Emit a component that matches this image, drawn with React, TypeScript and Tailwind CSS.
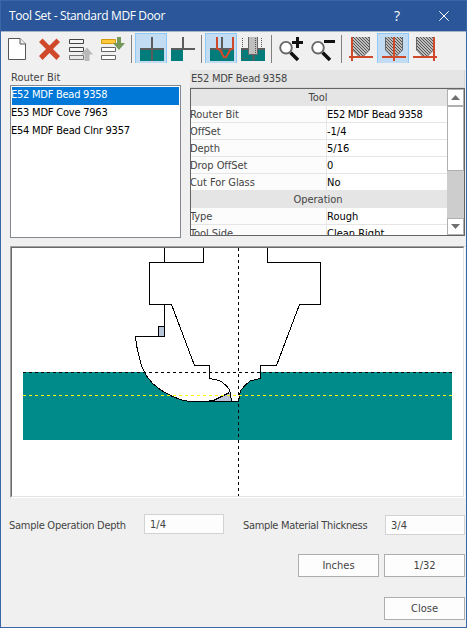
import type { ReactNode } from "react";

const RED = "#cf4a2b";
const TEAL = "#007c7a";
const DARK = "#5c5c5c";

function ToolButton({ active, children }: { active?: boolean; children: ReactNode }) {
  return (
    <button
      className={
        active
          ? "flex h-[30px] w-8 shrink-0 items-start border border-b-0 border-[#90c8f6] bg-[#c1dcf3] pt-[3px] pl-1"
          : "flex h-[30px] w-8 shrink-0 items-start pt-1 pl-[5px]"
      }
    >
      <svg width="24" height="24" viewBox="0 0 24 24" className="shrink-0 overflow-visible">
        {children}
      </svg>
    </button>
  );
}

function Separator() {
  return (
    <div className="flex h-[30px] w-1.5 shrink-0 pt-0.5 pl-0.5">
      <div className="h-7 w-px bg-[#808080]" />
    </div>
  );
}

function Lens() {
  return (
    <>
      <path d="M10.5 15.5L18 23" stroke="#111" strokeWidth="3.6" />
      <circle cx="6" cy="10.7" r="5.8" fill="#fff" stroke="#666" strokeWidth="1.9" />
    </>
  );
}

function RouterTip({ x }: { x: number }) {
  return (
    <path
      d={`M${x + 0.5} 0V13L${x + 7.5} 20H${x + 10.5}L${x + 17.5} 13V0`}
      fill="url(#hatch)"
      stroke="#666"
    />
  );
}

function Toolbar() {
  return (
    <div className="flex h-[36px] items-start pt-px">
      <ToolButton>
        <path d="M2.5 1.5H14L19.5 7V22.5H2.5Z" fill="#fff" stroke="#555" />
        <path d="M14 1.5V7H19.5" fill="#eee" stroke="#555" />
      </ToolButton>
      <ToolButton>
        <path
          d="M4.5 1.5L11.5 8.5L18.5 1.5L22 5L15 12L22 19L18.5 23L11.5 16L4.5 23L1 19L8 12L1 5Z"
          fill={RED}
        />
      </ToolButton>
      <ToolButton>
        <g fill="#f4f4f4" stroke="#444">
          <path d="M-.5 2.5H13.5V6.5H-.5ZM-.5 10.5H13.5V14.5H-.5Z" />
          <path d="M-.5 18.5H13.5V22.5H-.5Z" stroke="#777" fill="#e8e8e8" />
        </g>
        <path d="M17 10.5L23 17.5H19.5V24H14.5V17.5H11Z" fill="#b9b9b9" />
      </ToolButton>
      <ToolButton>
        <path d="M-.5 2.5H13.5V6.5H-.5Z" fill="#fdc83a" stroke="#d39a10" />
        <path d="M-.5 10.5H13.5V14.5H-.5ZM-.5 18.5H13.5V22.5H-.5Z" fill="#fff" stroke="#666" />
        <path d="M15 0H19V6H23L17 13L11 6H15Z" fill="#73985a" />
      </ToolButton>
      <Separator />
      <ToolButton active>
        <path d="M0 13H24V24H0Z" fill={TEAL} />
        <path d="M0 11H24V13H0ZM11 0H13V24H11Z" fill={DARK} />
      </ToolButton>
      <ToolButton>
        <path d="M-1 13H11V24H-1Z" fill={TEAL} />
        <path d="M-1 11H23V13H-1ZM10 0H12V13H10Z" fill={DARK} />
      </ToolButton>
      <Separator />
      <ToolButton active>
        <path d="M0 13H24V24H0Z" fill={TEAL} />
        <path d="M0 11H24V13H0ZM11 0H13V18H11Z" fill={DARK} />
        <path
          d="M7 0V11.5L10 13L14 20.2H16L20 13L23 11.5V0"
          fill="none"
          stroke={RED}
          strokeWidth="2"
        />
      </ToolButton>
      <ToolButton>
        <path d="M-1 13H23V24H-1Z" fill={TEAL} />
        <path d="M-1 11H23V13H-1ZM10.5 18H12.5V24H10.5Z" fill={DARK} />
        <path d="M6.5 0V17.5H15.5V0" fill="#bebebe" stroke="#666" />
        <path
          d="M.5 1V22M13.5 1V17M19.5 1V11"
          fill="none"
          stroke="#555"
          strokeDasharray="1 1"
          shapeRendering="crispEdges"
        />
        <path d="M.5 21.5H7" stroke="#555" strokeDasharray="1 1" shapeRendering="crispEdges" />
      </ToolButton>
      <Separator />
      <ToolButton>
        <Lens />
        <path d="M12 4H16V0H19V4H23V7H19V11H16V7H12Z" fill="#111" />
      </ToolButton>
      <ToolButton>
        <Lens />
        <path d="M12 3H23V6H12Z" fill="#111" />
      </ToolButton>
      <Separator />
      <ToolButton>
        <RouterTip x={2} />
        <path d="M-1 19H23V21H-1ZM1 0H3V24H1Z" fill={RED} />
      </ToolButton>
      <ToolButton active>
        <RouterTip x={3} />
        <path d="M0 19H24V21H0ZM11 0H13V24H11Z" fill={RED} />
      </ToolButton>
      <ToolButton>
        <RouterTip x={2} />
        <path d="M-1 19H23V21H-1ZM19 0H21V24H19Z" fill={RED} />
      </ToolButton>
    </div>
  );
}

const bits = ["E52 MDF Bead 9358", "E53 MDF Cove 7963", "E54 MDF Bead Clnr 9357"];

type Row = { heading: string } | { name: string; value: string };
const rows: Row[] = [
  { heading: "Tool" },
  { name: "Router Bit", value: "E52 MDF Bead 9358" },
  { name: "OffSet", value: "-1/4" },
  { name: "Depth", value: "5/16" },
  { name: "Drop OffSet", value: "0" },
  { name: "Cut For Glass", value: "No" },
  { heading: "Operation" },
  { name: "Type", value: "Rough" },
  { name: "Tool Side", value: "Clean Right" },
];

function PropertyGrid() {
  return (
    <div className="flex h-[148px] border border-[#646464] bg-white">
      <div className="flex-1 overflow-hidden">
        {rows.map((r, i) =>
          "heading" in r ? (
            <div key={i} className="h-[17px] bg-[#e5e5e5] pr-0.5 text-center leading-[18px]">
              {r.heading}
            </div>
          ) : (
            <div key={i} className="flex h-[17px] border-b border-[#e5e5e5] leading-[17px]">
              <div className="w-[136px] border-r border-[#e5e5e5] bg-[#fcfcfc] -indent-px tracking-[-0.06px]">{r.name}</div>
              <div className={r.value.startsWith("E5") ? "tracking-[-0.29px] text-black" : "text-black"}>
                {r.value}
              </div>
            </div>
          ),
        )}
      </div>
      <div className="flex w-[17px] flex-col bg-[#cdcdcd]">
        <div className="flex h-[17px] items-center justify-center border border-[#b0b0b0] bg-white">
          <svg width="9" height="5"><path d="M0 5L4.5 0L9 5Z" fill="#707070" /></svg>
        </div>
        <div className="h-[65px] border border-[#b0b0b0] bg-white" />
        <div className="mt-auto flex h-[17px] items-center justify-center border border-[#b0b0b0] bg-white">
          <svg width="9" height="5"><path d="M0 0L4.5 5L9 0Z" fill="#707070" /></svg>
        </div>
      </div>
    </div>
  );
}

function ProfileDrawing() {
  const bit =
    "M203.5 247V262.5H149.5V304.5H171.5L194.5 365.5H209.5V378.5L215 379.5L221.5 381.5L226 385.5L229.5 389.5L230.5 394.5L231.5 400.5L233 401.5H238.5L239.5 396.5L240.5 390.5L245.5 385L250 381L256 379.5L260.5 378.5V365.5H276.5L299.5 304.5H320.5V262.5H267.5V247";
  const blade =
    "M164.5 304.5V336.5H135.5L136.5 345L138.5 354.5L141.5 365.5L145.5 374.5L152.5 383.5L161.5 390.5L171.5 396L181.5 400L189.5 401.5H232L230.5 392.5L229.5 389.5L226 385.5L221.5 381.5L215 379.5L209.5 378.5V365.5H194.5L171.5 304.5Z";
  return (
    <svg width="451" height="248" viewBox="12 248 451 248" shapeRendering="crispEdges" className="block">
      <rect x="23" y="372" width="429" height="68" fill="#008b8b" />
      <path d={blade} fill="#fff" />
      <path d={bit} fill="#fff" />
      <path d="M205 401.5L213.5 400.5L221.5 396.5L229.5 392.5L231.5 401.5Z" fill="#b8c5d8" />
      <path d="M205 401.5L213.5 400.5L221.5 396.5L229.5 392.5" fill="none" stroke="#000" />
      <rect x="158.5" y="326.5" width="6" height="10" fill="#b8c5d8" stroke="#000" />
      <path d={bit} fill="none" stroke="#000" />
      <path
        d="M164.5 248V262M164.5 304.5V336.5H135.5L136.5 345L138.5 354.5L141.5 365.5L145.5 374.5L152.5 383.5L161.5 390.5L171.5 396L181.5 400L189.5 401.5H238"
        fill="none"
        stroke="#000"
      />
      <path d="M23 372.5H452M238.5 248V496" fill="none" stroke="#000" strokeDasharray="3 3" />
      <path d="M23 395.5H452" stroke="#ff0" strokeDasharray="3 3" />
    </svg>
  );
}

function ActionButton({ children }: { children: ReactNode }) {
  return (
    <button className="h-[23px] w-[81px] border border-[#adadad] bg-[#fdfdfd] leading-[21px]">{children}</button>
  );
}

export default function App() {
  return (
    <div className="flex h-[628px] w-[467px] flex-col overflow-hidden border-x border-b border-[#3b66a8] bg-[#f0f0f0] font-['DejaVu_Sans_Condensed','DejaVu_Sans',sans-serif] text-[11px] whitespace-nowrap text-[#444] [font-stretch:condensed]">
      <header className="flex h-8 shrink-0 items-center border-t border-b border-t-[#3b66a8] border-b-[#a5b3c8] bg-[#2b579a] pr-[17px] pl-2 font-['Open_Sans',sans-serif] text-xs text-white [font-stretch:normal]">
        <span className="flex-1 tracking-[-0.36px]">Tool Set - Standard MDF Door</span>
        <span className="mr-[39px] text-sm">?</span>
        <svg width="10" height="10" viewBox="0 0 10 10" className="shrink-0">
          <path d="M.3.3L9.7 9.7M9.7.3L.3 9.7" stroke="#fff" />
        </svg>
      </header>
      <svg width="0" height="0" className="fixed">
        <defs>
          <pattern id="hatch" width="3" height="3" patternUnits="userSpaceOnUse">
            <rect width="3" height="3" fill="#bdbdbd" />
            <path d="M0 0H1V1H0ZM1 1H2V2H1ZM2 2H3V3H2Z" fill="#555" />
          </pattern>
        </defs>
      </svg>
      <Toolbar />
      <main className="flex flex-1 flex-col pl-[9px]">
        <div className="flex gap-[9px] pt-0.5">
          <section className="w-[171px]">
            <h2 className="h-[15px] pl-px leading-[15px]">Router Bit</h2>
            <ul className="h-[153px] border border-[#828790] bg-white p-px text-black">
              {bits.map((b, i) => (
                <li
                  key={b}
                  className={
                    i === 0
                      ? "h-[18px] bg-[#0078d7] -indent-px leading-[15px] tracking-[-0.25px] text-white"
                      : "h-[18px] -indent-px leading-[15px] tracking-[-0.22px]"
                  }
                >
                  {b}
                </li>
              ))}
            </ul>
          </section>
          <section className="w-[275px]">
            <h2 className="h-[18px] border-r border-b border-[#d5d5d5] bg-[#e5e5e5] pl-px leading-[18px] tracking-[-0.27px]">
              E52 MDF Bead 9358
            </h2>
            <PropertyGrid />
          </section>
        </div>
        <div className="mt-2 h-[252px] w-[455px] border border-t-[#a0a0a0] border-r-white border-b-white border-l-[#a0a0a0]">
          <div className="h-[250px] border border-t-[#696969] border-r-[#e3e3e3] border-b-[#e3e3e3] border-l-[#696969] bg-white">
            <ProfileDrawing />
          </div>
        </div>
        <div className="flex pt-4">
          <span className="w-[134px] -indent-px pt-px leading-[22px] tracking-[-0.27px]">Sample Operation Depth</span>
          <div className="h-5 w-20 border border-[#d3d3d3] bg-[#fdfdfd] pl-[5px] leading-[19px]">1/4</div>
          <span className="w-[161px] pt-px pl-[19px] leading-[22px] tracking-[-0.33px]">Sample Material Thickness</span>
          <div className="mt-px h-5 w-20 border border-[#d3d3d3] bg-[#fdfdfd] pl-[5px] leading-[19px]">3/4</div>
        </div>
        <div className="mt-[17px] flex w-[455px] justify-end gap-[5px]">
          <ActionButton>Inches</ActionButton>
          <ActionButton>1/32</ActionButton>
        </div>
        <div className="mt-5 flex w-[455px] justify-end">
          <ActionButton>Close</ActionButton>
        </div>
      </main>
    </div>
  );
}
